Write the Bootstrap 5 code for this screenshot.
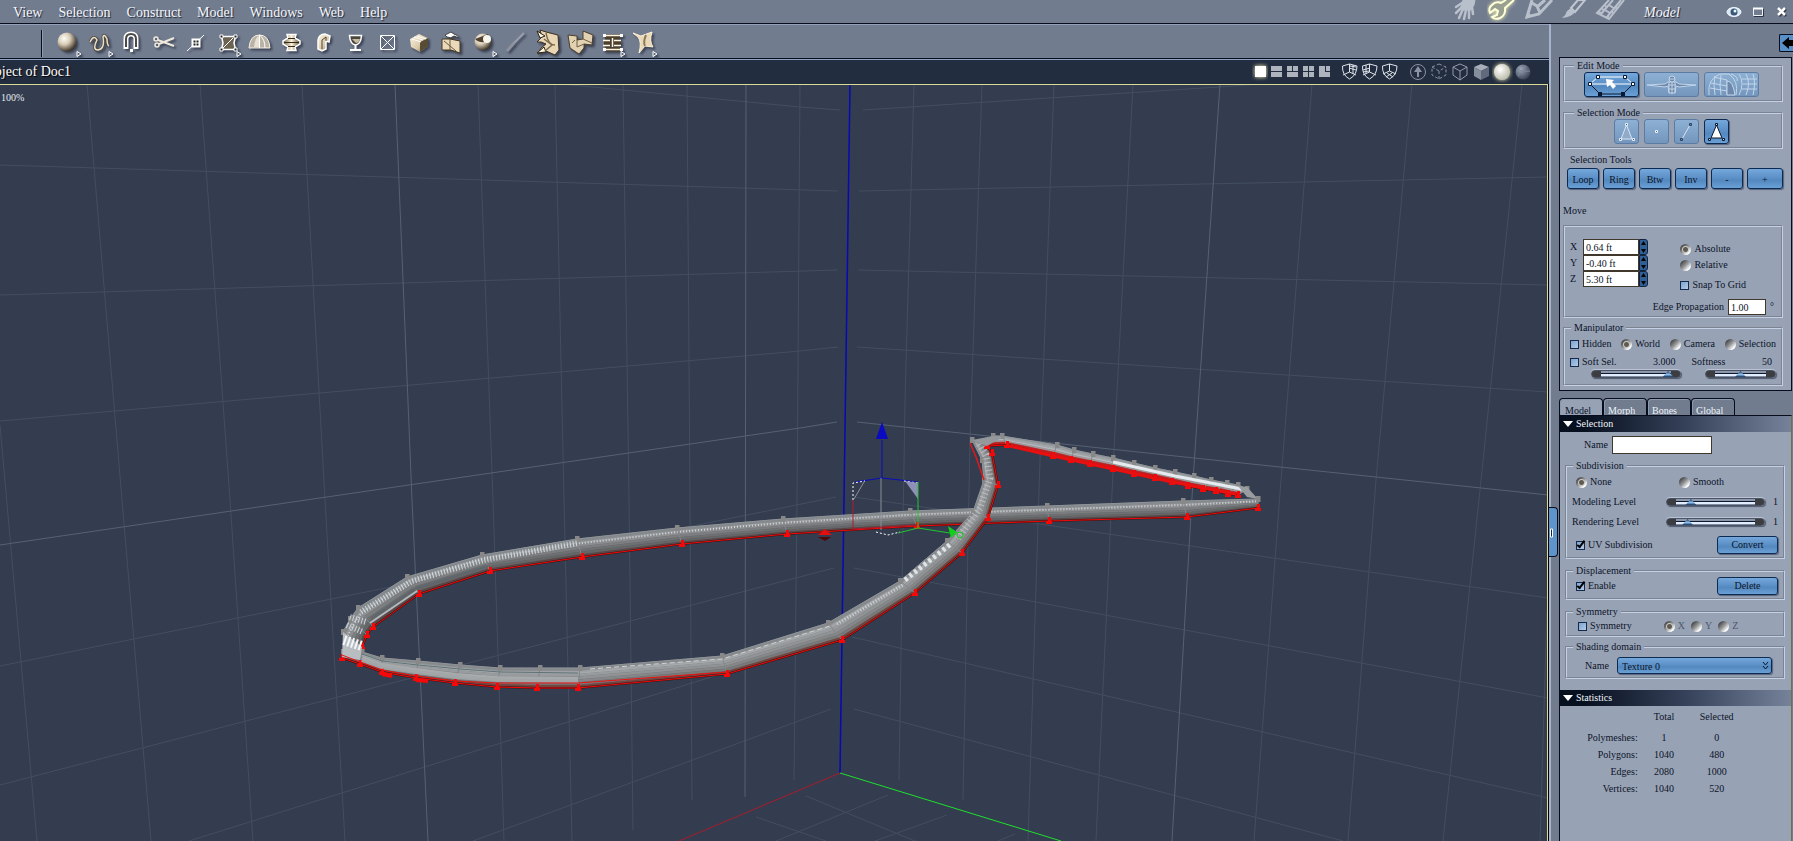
<!DOCTYPE html>
<html lang="en">
<head>
    <meta charset="UTF-8">
    <meta name="viewport" content="width=device-width, initial-scale=1.0">
    <title>Model - Doc1</title>
    <!-- Bootstrap CSS -->
    <link href="https://cdn.jsdelivr.net/npm/bootstrap@5.3.0/dist/css/bootstrap.min.css" rel="stylesheet">
    <!-- Custom CSS -->
    <style>
      :root {
        --chrome: #727c8f;
        --panel: #98a2b5;
        --ink: #0b1428;
        --edge: #070d1c;
        --blue: #5990c8;
      }
      body {
        background-color: var(--chrome);
        color: var(--ink);
        font-family: "Liberation Serif", "Times New Roman", serif;
        font-size: 10px;
        line-height: 12px;
      }
      button, input, select { font-family: inherit; font-size: 10px; line-height: 12px; color: var(--ink); }
      button { border: 0; padding: 0; background: none; }
      svg { display: block; }

      /* menu and tool bars */
      .menu-bar { height: 24px; padding-left: 13px; border-bottom: 1px solid var(--edge); overflow: hidden; }
      .menu-bar a, .mode-name { color: #f4f7fb; font-size: 14px; line-height: 24px; padding-top: 2px; text-decoration: none; text-shadow: 1px 1px 1px #1b2438; }
      .mode-name { font-style: italic; width: 82px; }
      .room-btns { gap: 4px; margin-right: 17px; }
      .window-btns { gap: 8px; padding-right: 3px; }
      .tool-bar { height: 35px; background: var(--chrome); border-top: 1px solid #93a0b8; border-bottom: 1px solid var(--edge); padding: 4px 0 0 41px; }
      .tool-bar svg { filter: drop-shadow(2px 2px 1px #3b4355); }
      .divider { width: 1px; height: 27px; background: var(--edge); box-shadow: 1px 0 #8e9ab0; margin-right: 10px; }
      .title-bar { height: 25px; background: #232d40; border-top: 1px solid #8ea2c4; padding-right: 15px; }
      .doc-title { width: 71px; overflow: hidden; color: #fff; font-size: 14px; line-height: 24px; white-space: nowrap; text-shadow: 1px 1px 1px #000; }

      /* 3D view */
      .view { border-top: 1px solid #d9da98; border-right: 1px solid #d9da98; background: #333d4f; min-height: 0; margin-right: 1px; }
      .view svg { width: 100%; height: 100%; }
      .view-wrap { background: #000; min-height: 0; min-width: 0; }
      .zoom-label { left: 1px; top: 7px; color: #e6ebf2; }

      /* side panel */
      .side { width: 244px; flex: none; border-left: 2px solid #a5b3cd; padding-left: 8px; }
      .back-row { height: 33px; padding-top: 10px; }
      .back-btn { width: 14px; height: 18px; background: var(--blue); border: 1px solid var(--edge); border-right: 0; border-radius: 2px 0 0 2px; }
      .handle { left: -2px; top: 483px; width: 9px; height: 50px; background: #5f94cb; border: 1px solid var(--edge); border-left: 0; border-radius: 0 4px 4px 0; }
      .panel-box { background: var(--panel); border: 1px solid var(--edge); padding: 2px 8px 4px 3px; margin-right: 1px; }
      fieldset { border: 2px groove #c3d0e6; padding: 0 5px 3px 5px; }
      legend { float: none; width: auto; margin: 0 0 0 1px; padding: 0 3px; font-size: 10px; line-height: 12px; }

      .blue-btn { background: linear-gradient(#75a8dc, #5489c0 60%, #6ba0d6); border: 1px solid #0d2a50; border-radius: 3px; box-shadow: 1px 1px 1px #56627a; }
      .mode-row { gap: 5px; padding-right: 4px; }
      .mode-btn { height: 25px; }
      .mode-btn.wide-btn { width: 55px; }
      .mode-btn.square-btn { width: 25px; }
      .mode-btn.faded { background: linear-gradient(#8db0d4, #7496bd); border-color: #5b7ba3; box-shadow: none; }
      .select-mode { margin-top: 5px; }
      .tools-label { padding: 5px 0 2px 7px; }
      .tool-btn { height: 21px; padding-top: 2px; }
      .wide-label { width: 61px; height: 18px; }

      .move-set { padding: 12px 5px 1px 5px; margin-top: 8px; }
      .move-set .axis-label { width: 13px; }
      .space-opts { padding-right: 30px; }
      .edge-row { padding: 8px 2px 0 0; }
      .num-input { border: 1px solid #40382c; background: #fff; padding: 0 2px; height: 16px; min-width: 0; border-radius: 0; }
      .pos-box { width: 56px; }
      .prop-box { width: 38px; }
      .name-box { width: 100px; height: 18px; }
      .spinner { width: 9px; height: 16px; background: #2f5f94; border: 1px solid #10243f; border-radius: 0 3px 3px 0; }

      .tick, .dot { appearance: none; flex: none; margin: 0; }
      .tick { width: 9px; height: 9px; border: 1px solid #15294a; background: linear-gradient(135deg, #7ba3cf, #b4cbe6); position: relative; }
      .tick:checked::after { content: ""; position: absolute; left: 2px; top: -3px; width: 4px; height: 9px; border: solid #000; border-width: 0 2px 2px 0; transform: rotate(38deg); }
      .dot { width: 11px; height: 11px; border-radius: 50%; background: linear-gradient(135deg, #2c2c2c 5%, #97999b 50%, #fff 80%); }
      .dot:checked { background: radial-gradient(circle, #5f5b52 0 2px, #c9c8c4 3px, transparent 4px), linear-gradient(135deg, #2c2c2c 5%, #97999b 50%, #fff 80%); }
      .pick { display: flex; align-items: center; gap: 3px; }
      .pick.off { color: #4d586c; }
      .soft-row { padding-top: 2px; }
      .soft-sliders { padding: 2px 0 3px; }

      .slider { appearance: none; height: 8px; margin: 0; border-radius: 4px; border: 1px solid #4a5466; padding: 0 2px;
        background: linear-gradient(90deg, #3c3d40 9px, transparent 9px calc(100% - 9px), #3c3d40 calc(100% - 9px)), linear-gradient(#8d98ab 2px, #0b1830 2px 3px, #e2edff 3px 5px, #7f8b9e 5px);
        box-shadow: 1px 1px 1px #4f5a6e, 0 -1px #b9c3d3; }
      .slider::-webkit-slider-thumb { appearance: none; width: 11px; height: 6px; background: linear-gradient(#10305c, #8fc0ef 60%, #10305c); clip-path: polygon(50% 0, 100% 100%, 0 100%); }
      .soft-range { width: 90px; }
      .soft-fall { width: 71px; }
      .level { width: 99px; }

      .tabs { height: 17px; margin-top: 7px; }
      .tabs button { width: 44px; border: 1px solid var(--edge); border-bottom: 0; border-radius: 4px 4px 0 0; color: #eef2f8; padding: 6px 0 0 4px; text-align: left; box-shadow: inset 1px 1px #8d99b0; }
      .tabs button.active { background: var(--panel); color: var(--ink); padding-left: 5px; }
      .props { background: var(--panel); border: 1px solid var(--edge); border-bottom: 0; border-right-color: #6b7152; margin-right: 1px; }
      .section-bar { height: 16px; width: 100%; background: linear-gradient(90deg, #07101f 10%, #36425a 55%, #76819a); color: #f2f5fa; padding-left: 3px; gap: 3px; }
      .prop-set { margin: 6px 6px 0 5px; }
      .inset-row { padding-left: 4px; }
      .sym-row { gap: 6px; padding: 2px 0 0 6px; }
      .sym-label { margin-right: 26px; }
      .domain-set { margin-top: 4px; }
      .domain-row { padding: 4px 6px 0 0; }
      .combo { height: 17px; width: 155px; appearance: none; padding: 3px 4px 0; }
      .combo-mark { right: 3px; top: 5px; pointer-events: none; }
      .stats-bar { margin-top: 11px; }
      .stats { width: 164px; margin: 2px 0 0 19px; }
      .stats th, .stats td { font-weight: normal; text-align: center; height: 17px; padding: 0; }
      .stats tbody th { text-align: right; }
      .stats thead th { height: 21px; padding-bottom: 4px; }
      .stats col { width: 52px; }
      .stats col.names { width: 58px; }
    </style>
</head>
<body class="vh-100 d-flex flex-column overflow-hidden">

    <!-- shared paint -->
    <svg width="0" height="0" class="position-absolute">
      <defs>
        <radialGradient id="ball" cx="35%" cy="32%" r="70%"><stop offset="0" stop-color="#fffdf6"/><stop offset=".45" stop-color="#d9cdb8"/><stop offset="1" stop-color="#3d3325"/></radialGradient>
        <linearGradient id="sand" x1="0" y1="0" x2="1" y2="1"><stop offset="0" stop-color="#fff7e4"/><stop offset=".6" stop-color="#d8c8a8"/><stop offset="1" stop-color="#6e5f43"/></linearGradient>
        <linearGradient id="brass" x1="0" x2="1"><stop offset="0" stop-color="#6a5c44"/><stop offset=".5" stop-color="#fff4dc"/><stop offset="1" stop-color="#5a4c36"/></linearGradient>
        <radialGradient id="pearl" cx="38%" cy="35%" r="70%"><stop offset="0" stop-color="#fff"/><stop offset="1" stop-color="#b9b9a8"/></radialGradient>
        <radialGradient id="darkball" cx="35%" cy="32%" r="70%"><stop offset="0" stop-color="#a0a9b9"/><stop offset="1" stop-color="#3b4558"/></radialGradient>
        <symbol id="more" viewBox="0 0 6 6"><path d="M1 0.5L5 3L1 5.5Z" fill="#5c6678" stroke="#fff"/></symbol>
      </defs>
    </svg>

    <header class="menu-bar d-flex align-items-center flex-shrink-0">
      <nav class="d-flex gap-3">
        <a href="#">View</a>
        <a href="#">Selection</a>
        <a href="#">Construct</a>
        <a href="#">Model</a>
        <a href="#">Windows</a>
        <a href="#">Web</a>
        <a href="#">Help</a>
      </nav>
      <div class="room-btns d-flex ms-auto">
        <button aria-label="Assemble"><svg width="32" height="24" fill="none" stroke="#b8c0cc" stroke-linecap="round"><path d="M12 0L10 7L12 10L20 10L23 5L24 0Z" fill="#b8c0cc"/><path d="M11 3L5 7M11 7L5 13M12 9L8 18M15 10L13 19M18 10L18 18M21 7L22 14" stroke-width="2.500"/></svg></button>
        <button aria-label="Model room"><svg width="32" height="24"><path d="M27 0L18 8Q19 15 13 18Q8 20 5 17L10 15L11 11L8 9L3 13Q1 8 5 5Q9 1 14 3L19 0" fill="#99a08f" stroke="#ffffd8" stroke-width="2" filter="drop-shadow(0 0 2px #f4f5b4)"/></svg></button>
        <button aria-label="Draw"><svg width="32" height="24" fill="none" stroke="#b8c0cc" stroke-width="3"><path d="M9 0L4 17L16 14L29 0M9 3L14 6L17 13M14 7L22 0"/><path d="M4 18L5 13L9 16Z" fill="#b8c0cc" stroke-width="1"/></svg></button>
        <button aria-label="Texture"><svg width="32" height="24"><path d="M19 0L12 8L16 12L26 0Z" fill="none" stroke="#c0c7d2" stroke-width="2"/><path d="M12 8L16 12Q13 17 3 18Q7 15 8 11Z" fill="#b8c0cc"/></svg></button>
        <button aria-label="Render"><svg width="32" height="24" fill="none" stroke="#b8c0cc"><path d="M14 0L2 13L14 19L29 0M18 0L6 14M26 0L12 17" stroke-width="2"/><path d="M10 10L15 13M14 5L20 9M4 12L6 13M7 9L9 10M10 6L12 7M12 16L14 17M16 11L18 13M20 7L22 8" stroke-width="2"/></svg></button>
      </div>
      <span class="mode-name">Model</span>
      <div class="window-btns d-flex">
        <button aria-label="Show"><svg width="16" height="24"><ellipse cx="8" cy="12" rx="7" ry="4.500" fill="#dbe9f6" stroke="#f3f8fd"/><circle cx="8" cy="12" r="3.500" fill="#3d5674"/><circle cx="9" cy="11" r="1.500" fill="#dff"/></svg></button>
        <button aria-label="Maximize"><svg width="16" height="24"><path d="M3.500 8.500H12.500V15.500H3.500Z" fill="none" stroke="#eef3f9"/><path d="M3 8.500H13" stroke="#fff" stroke-width="2"/><path d="M13.500 9V16.500H4" fill="none" stroke="#2c3548"/></svg></button>
        <button aria-label="Close"><svg width="16" height="24"><path d="M5 9L12 16M12 9L5 16" stroke="#2c3548" stroke-width="2.500"/><path d="M4 8L11 15M11 8L4 15" stroke="#fff" stroke-width="2.500"/></svg></button>
      </div>
    </header>

    <main class="d-flex flex-fill overflow-hidden">
      <div class="d-flex flex-column flex-fill view-wrap">
        <div class="tool-bar d-flex align-items-center flex-shrink-0">
          <span class="divider"></span>
          <button aria-label="Primitive"><svg width="32" height="33"><circle cx="15" cy="15" r="9.500" fill="url(#ball)"/><use href="#more" x="24" y="24" width="6" height="6"/></svg></button>
          <button aria-label="Curve"><svg width="32" height="33" fill="none"><path d="M6 15Q10 7 13 13Q8 23 14 23Q21 22 19 10Q20 6 23 12Q23 18 25 19" stroke="#4f4636" stroke-width="3"/><path d="M6 15Q10 7 13 13Q8 23 14 23Q21 22 19 10Q20 6 23 12Q23 18 25 19" stroke="#e8dfcc" stroke-width="1.500"/><use href="#more" x="24" y="24" width="6" height="6"/></svg></button>
          <button aria-label="Magnet"><svg width="32" height="33" fill="none"><path d="M10 22V12Q10 7 15 7Q20 7 20 12V22" stroke="#fff" stroke-width="5"/><path d="M10 20V12Q10 7 15 7Q20 7 20 12V20" stroke="#4c4a48" stroke-width="2"/><path d="M14 22h3v3h-3z" fill="#fff"/></svg></button>
          <button aria-label="Cut"><svg width="32" height="33" fill="none" stroke="#f1eadc" stroke-width="1.500"><circle cx="8" cy="12" r="2"/><circle cx="9" cy="18" r="2"/><path d="M10 13L26 19M11 17L26 11" stroke-width="2"/></svg></button>
          <button aria-label="Add point"><svg width="32" height="33" fill="none"><path d="M7 24L24 8" stroke="#fff"/><path d="M12.500 12.500h7v7h-7z" fill="#222" stroke="#fff" stroke-width="2"/><path d="M16 13v6M13 16h6" stroke="#fff"/></svg></button>
          <button aria-label="Polygon"><svg width="32" height="33"><path d="M9.500 9.500H23.500L22 16L23.500 22.500H9.500L11 16Z" fill="#6b6252" stroke="#fff" stroke-width="1.500"/><path d="M8 8h3v3H8zM22 8h3v3h-3zM8 21h3v3H8zM22 21h3v3h-3z" fill="#222" stroke="#fff"/><path d="M11 21L21 11" stroke="#fff"/><use href="#more" x="24" y="24" width="6" height="6"/></svg></button>
          <button aria-label="Dome"><svg width="32" height="33"><path d="M5 21Q6 8 15.500 8Q25 8 26 21Z" fill="#b9b2a5" stroke="#f6f0e4"/><path d="M10 20Q11 10 15 9V20Z" fill="#e6e0d4"/><path d="M15.500 8V21M15.500 8Q21 12 21 21" fill="none" stroke="#fff"/></svg></button>
          <button aria-label="Lathe"><svg width="32" height="33"><path d="M11 7.500H20L19 11L24 14V17L19 20L20 23.500H11L12 20L7 17V14L12 11Z" fill="url(#brass)" stroke="#fff" stroke-width="1.500"/><path d="M8 15.500H23M12 11.500H19M12 19.500H19" stroke="#372c1c"/></svg></button>
          <button aria-label="Sweep"><svg width="32" height="33"><path d="M10 22V13Q11 7 17 7L22 9L21 15L18 14V22L14 24Z" fill="url(#sand)" stroke="#fff" stroke-width="1.500"/><path d="M14 22V13L18 10V14" fill="none" stroke="#50432e"/></svg></button>
          <button aria-label="Goblet"><svg width="32" height="33"><path d="M9.500 8.500H21.500Q21 17 15.500 18Q10 17 9.500 8.500Z" fill="#4b463e" stroke="#fff" stroke-width="1.500"/><path d="M12 12H20Q19 16 16 16Z" fill="#c8bb9f"/><path d="M15.500 18V22M10 23H21" stroke="#fff" stroke-width="2"/></svg></button>
          <button aria-label="Grid box"><svg width="32" height="33" fill="none" stroke="#fff"><path d="M8.500 8.500H22.500V22.500H8.500Z"/><path d="M9 9L22 22M22 9L9 22"/></svg></button>
          <button aria-label="Cube"><svg width="32" height="33"><path d="M6 12L15 7L24 11L24 19L16 25L7 20Z" fill="url(#sand)"/><path d="M16 15L24 11V19L16 25Z" fill="#594c35"/><path d="M8 12L17 15M10 10L19 13M13 9L22 12" stroke="#fff"/></svg></button>
          <button aria-label="Box pick"><svg width="32" height="33"><path d="M6 12H14L24 14V26L15 23H6Z" fill="#ead9ba" stroke="#453923"/><path d="M8 14L20 24M14 12V23" stroke="#6b5b3d"/><path d="M9 8L15 5L18 7Q22 8 23 11L18 9Q15 12 11 10Z" fill="#fff" stroke="#444"/></svg></button>
          <button aria-label="Sphere cut"><svg width="32" height="33"><circle cx="15" cy="15" r="8.500" fill="url(#ball)"/><path d="M7 12Q13 18 23 13L20 7Z" fill="#51442f"/><ellipse cx="19" cy="12" rx="4" ry="4" fill="#f8f5ec"/><use href="#more" x="24" y="24" width="6" height="6"/></svg></button>
          <button aria-label="Knife"><svg width="32" height="33"><path d="M13 17L24 6" stroke="#9aa0aa" stroke-width="2"/><path d="M7 24L14 16" stroke="#8c929d" stroke-width="3"/></svg></button>
          <button aria-label="Extrude"><svg width="32" height="33"><path d="M8 3L14 5L26 8L27 23L23 28L14 24L6 27L9 21L14 17L9 15L5 15L10 10Z" fill="#e8d6b4" stroke="#3b3020"/><path d="M5 4L13 9L8 11ZM5 26L12 20L14 25Z" fill="#fff6e2" stroke="#2b2216"/><path d="M14 6Q16 18 23 18M12 12L20 18L13 24" stroke="#7a6a4c" fill="none" stroke-width="1.500"/></svg></button>
          <button aria-label="Bend"><svg width="32" height="33"><path d="M4 8L13 9V13L19 12V4L29 8L28 18L20 17V21L15 27L6 21Z" fill="#e3d2b2" stroke="#4b3e29"/><path d="M13 13V20L20 17M19 12L28 16M8 16L11 13" stroke="#6d5f45" fill="none"/></svg></button>
          <button aria-label="Align"><svg width="32" height="33"><path d="M9 10H24M8 16H25M9 22H24" stroke="#4c3f2c" stroke-width="5"/><path d="M8 8.500H25M7 13.500H14M18 13.500H25M7 18.500H14M18 18.500H25M8 22.500H25M16.500 11V20" stroke="#fff6e0" stroke-width="1.500"/><path d="M7 7h3v3H7zM24 7h3v3h-3zM7 21h3v3H7zM24 21h3v3h-3z" fill="#fff"/><use href="#more" x="24" y="24" width="6" height="6"/></svg></button>
          <button aria-label="Twist"><svg width="32" height="33"><path d="M5 6L13 9L24 5Q21 14 25 20L17 19L11 26Q14 15 10 10Z" fill="#ead9b8" stroke="#fff2d6"/><path d="M18 8Q15 15 17 19" stroke="#8a7a5c" fill="none" stroke-width="2"/><use href="#more" x="24" y="24" width="6" height="6"/></svg></button>
        </div>

        <div class="title-bar d-flex align-items-center flex-shrink-0">
          <div class="doc-title d-flex justify-content-end">bject of Doc1</div>
          <div class="d-flex ms-auto">
            <button aria-label="One view"><svg width="16" height="22"><path d="M3 5h11v11H3z" fill="#fff" filter="drop-shadow(0 0 2px #ffffb0)"/></svg></button>
            <button aria-label="Two views"><svg width="16" height="22" fill="#aeb4be"><path d="M3 5h11v5H3zM3 11h11v5H3z"/></svg></button>
            <button aria-label="Three views"><svg width="16" height="22" fill="#aeb4be"><path d="M3 5h5v5H3zM9 5h5v5H9zM3 11h11v5H3z"/></svg></button>
            <button aria-label="Four views"><svg width="16" height="22" fill="#aeb4be"><path d="M3 5h5v5H3zM9 5h5v5H9zM3 11h5v5H3zM9 11h5v5H9z"/></svg></button>
            <button aria-label="Corner views" class="me-2"><svg width="16" height="22" fill="#aeb4be"><path d="M3 5h6v6h5v5H3zM10 5h4v5h-4z"/></svg></button>
            <button aria-label="Left plane"><svg width="20" height="22" fill="none" stroke="#dfe4ea"><path d="M2.500 5L9.500 3L17 5Q17 14 9.500 18Q2 14 2.500 5Z"/><path d="M9.500 3V11L3 14M9.500 11L16 14M9 7L16 9M13 4V13M10 5L16 6" /></svg></button>
            <button aria-label="Right plane"><svg width="20" height="22" fill="none" stroke="#dfe4ea"><path d="M2.500 5L9.500 3L17 5Q17 14 9.500 18Q2 14 2.500 5Z"/><path d="M9.500 3V11L3 14M9.500 11L16 14M10 7L3 9M6 4V13M9 10L3 11" /></svg></button>
            <button aria-label="Floor plane" class="me-2"><svg width="20" height="22" fill="none" stroke="#dfe4ea"><path d="M2.500 5L9.500 3L17 5Q17 14 9.500 18Q2 14 2.500 5Z"/><path d="M9.500 3V10L3 13M9.500 10L16 13M7 12L13 16M12 12L6 16" /></svg></button>
            <button aria-label="Light"><svg width="21" height="22" fill="none" stroke="#8a93a3"><circle cx="10" cy="11" r="7.500"/><path d="M10 5L14 11H11V16H9V11H6Z" fill="#8a93a3" stroke="none"/></svg></button>
            <button aria-label="Bounding box"><svg width="21" height="22" fill="none" stroke="#8a93a3" stroke-dasharray="3 2"><path d="M10 3L17 6V14L10 18L3 14V6Z"/><path d="M3 6L10 10L17 6M10 10V18"/></svg></button>
            <button aria-label="Wireframe"><svg width="21" height="22" fill="none" stroke="#929bab"><path d="M10 3L17 6V14L10 19L3 14V6Z"/><path d="M3 6L10 10L17 6M10 10V19"/></svg></button>
            <button aria-label="Flat"><svg width="21" height="22"><path d="M10 3L18 6L10 10L3 6Z" fill="#a8afba"/><path d="M3 6L10 10V19L3 15Z" fill="#858e9d"/><path d="M18 6L10 10V19L18 15Z" fill="#606a7c"/></svg></button>
            <button aria-label="Shaded"><svg width="21" height="22"><circle cx="10" cy="11" r="8" fill="url(#pearl)" filter="drop-shadow(0 0 2px #f4f5b4)"/></svg></button>
            <button aria-label="Textured"><svg width="21" height="22"><circle cx="10" cy="11" r="7.500" fill="url(#darkball)"/><path d="M4 8Q10 12 17 10M5 15Q10 10 13 5" stroke="#7c879b" fill="none"/></svg></button>
          </div>
        </div>

        <div class="view flex-fill position-relative">
          <span class="zoom-label position-absolute">100%</span>
          <svg viewBox="0 85 1547 756" preserveAspectRatio="xMidYMid slice" fill="none">
            <defs>
              <marker id="greyVert" markerWidth="5" markerHeight="6" refX="2.500" refY="3" markerUnits="userSpaceOnUse"><path d="M0 0h5v6H0z" fill="#888"/></marker>
              <marker id="redVert" markerWidth="6" markerHeight="8" refX="3" refY="4" markerUnits="userSpaceOnUse"><path d="M2 0h3v4h1v3H0V4h2z" fill="#f40808"/></marker>
            </defs>
            <!-- walls and floor -->
            <g stroke="#434e61">
              <path d="M0 425L37 841M87 84L122 500L151 841M200 84L230 500L253 841M302 84L325 500L345 841M478 84L493 500L504 841M555 84L564 500L572 841M623 84L629 500L633 830M687 84L690 500L692 800M800 84L797 500L794 780"/>
              <path d="M914 84L905 400L899 780M982 84L970 440L963 800M1054 84L1040 460L1028 841M1133 84L1114 450L1096 841M1312 84L1281 480L1254 841M1412 84L1376 480L1348 841M1522 84L1480 490L1443 841M1547 610L1540 841"/>
              <path d="M561 84L800 107L840 110M0 165L838 191M0 295L838 270M0 421L800 351L838 347M0 666L836 497M0 785L834 568M189 841L832 639M473 841L831 709"/>
              <path d="M863 110L1219 87L1260 84M859 191L1548 177M858 270L1548 285M857 347L1548 392M854 497L1548 598M854 568L1548 698M852 637L1548 798M854 709L1343 841"/>
              <path d="M806 796L915 841M756 817L826 841M888 795L776 841M947 815L875 841M1015 834L998 841"/>
            </g>
            <path stroke="#566174" d="M395 84L412 500L428 841M746 84L745 797M1220 84L1193 480L1172 841M0 545L306 500L800 428L837 422M857 422L1194 458L1548 495"/>
            <!-- axes -->
            <path stroke="#0808b4" stroke-width="1.500" d="M850 84L844 500L840 773"/>
            <path stroke="#a81c2c" d="M840 773L679 841"/>
            <path stroke="#1fe02c" d="M840 773L1061 841"/>
            <g id="track"></g>
            <!-- manipulator -->
            <path stroke="#0a0ac0" d="M882 440V478M855 482L882 478L918 482"/>
            <path fill="#0a0ac0" d="M882 422L888 439H876Z"/>
            <path stroke="#8a8f98" d="M881 478V530"/>
            <path stroke="#b01c2c" d="M853 500V529L917 525"/>
            <path stroke="#fff" stroke-dasharray="2 2" d="M853 500V483L865 481M904 481L918 483M876 532L888 535L900 532"/>
            <path fill="#8f90b8" d="M905 481L918 483V499Z"/>
            <path stroke="#8a8f98" d="M854 499L864 482"/>
            <path stroke="#1fc82c" d="M918 482V528L950 533M918 528L898 533"/>
            <path fill="#10d01c" d="M948 526L957 532L951 538Z"/>
            <circle cx="960" cy="535" r="3" stroke="#10d01c"/>
            <path fill="#e01010" d="M825 529L832 535H818Z"/>
            <path fill="#500808" d="M818 537H831L825 541Z"/>
          </svg>
        </div>
      </div>

      <aside class="side d-flex flex-column position-relative">
        <button class="handle position-absolute" aria-label="Collapse panel"><svg width="8" height="48"><path d="M1.500 21h2v8h-2z" stroke="#fff" fill="#10243f"/></svg></button>
        <div class="back-row d-flex justify-content-end"><button class="back-btn" aria-label="Back"><svg width="13" height="16"><path d="M2 8L9 2V5H13V11H9V14Z" fill="#000"/></svg></button></div>

        <section class="panel-box">
          <fieldset>
            <legend class="ms-1">Edit Mode</legend>
            <div class="d-flex justify-content-center mode-row">
              <button class="blue-btn mode-btn wide-btn" aria-label="Cage"><svg width="53" height="23" fill="none"><path d="M5 11L13 4H40L48 11M5 11H48" stroke="#fff"/><path d="M5 11L15 21H38L48 11" stroke="#081830"/><path d="M3.500 9.500h3v3h-3zM11.500 2.500h3v3h-3zM38.500 2.500h3v3h-3zM46.500 9.500h3v3h-3z" fill="#fff" stroke="#081830"/><path d="M13 19h4v4h-4zM36 19h4v4h-4z" fill="#081830"/><path d="M21 6L29 7L27 9L31 13L28 16L25 12L22 14Z" fill="#fff"/></svg></button>
              <button class="blue-btn mode-btn wide-btn faded" aria-label="Pose"><svg width="53" height="23" fill="none" stroke="#c3d6ea"><path d="M2 12L20 11L23 9H31L34 11L51 12L34 14L31 13L30 20H24L23 13L20 14Z" fill="#6d88aa"/><path d="M27 3V21M24 9V20M30 9V20M23 12H31M24 16H30"/><circle cx="27" cy="6" r="3" fill="#6d88aa"/><path d="M24 6H30"/></svg></button>
              <button class="blue-btn mode-btn wide-btn faded" aria-label="UV"><svg width="53" height="23" fill="none" stroke="#c3d6ea"><path d="M4 22Q2 6 15 1H24Q34 8 31 22M6 10L22 13M5 15L22 18M9 4L22 7M10 3Q8 12 10 22M16 2Q14 12 16 22M22 7V22M34 22Q40 10 34 1M41 22Q46 10 41 1M48 22Q51 10 48 1M37 6H52M38 11H52M37 16H52M26 1Q34 4 32 8"/><path d="M22 8Q28 8 30 22H22Z" fill="#6d88aa"/></svg></button>
            </div>
          </fieldset>

          <fieldset class="select-mode">
            <legend class="ms-1">Selection Mode</legend>
            <div class="d-flex justify-content-center mode-row">
              <button class="blue-btn mode-btn square-btn faded" aria-label="Any"><svg width="23" height="23"><path d="M11.500 5L17 19H6Z" fill="#8fabc9" stroke="#d7e5f3"/><path d="M10.500 3.500h2v2h-2zM4.500 18.500h2v2h-2zM17.500 18.500h2v2h-2z" fill="#456" stroke="#e6f0fa"/></svg></button>
              <button class="blue-btn mode-btn square-btn faded" aria-label="Vertex"><svg width="23" height="23"><path d="M10.500 10.500h2v2h-2z" fill="#468" stroke="#f0f6fc"/></svg></button>
              <button class="blue-btn mode-btn square-btn faded" aria-label="Edge"><svg width="23" height="23"><path d="M7 19L15 5" stroke="#d7e5f3"/><path d="M14.500 3.500h2v2h-2zM5.500 18.500h2v2h-2z" fill="#6f89a8" stroke="#2a4468"/></svg></button>
              <button class="blue-btn mode-btn square-btn" aria-label="Face"><svg width="23" height="23"><path d="M11.500 5L17 18H6Z" fill="#fff" stroke="#081830"/><path d="M10.500 3.500h2v2h-2zM3.500 18.500h2v2h-2zM17.500 18.500h2v2h-2z" fill="#cde" stroke="#081830"/></svg></button>
            </div>
          </fieldset>

          <div class="tools-label">Selection Tools</div>
          <div class="row g-0 row-cols-6 ms-1">
            <div class="col pe-1"><button class="blue-btn tool-btn w-100">Loop</button></div>
            <div class="col pe-1"><button class="blue-btn tool-btn w-100">Ring</button></div>
            <div class="col pe-1"><button class="blue-btn tool-btn w-100">Btw</button></div>
            <div class="col pe-1"><button class="blue-btn tool-btn w-100">Inv</button></div>
            <div class="col pe-1"><button class="blue-btn tool-btn w-100">-</button></div>
            <div class="col"><button class="blue-btn tool-btn w-100">+</button></div>
          </div>
          <div class="pt-3">Move</div>

          <fieldset class="move-set">
            <div class="d-flex justify-content-between">
              <div>
                <div class="d-flex align-items-center"><label for="posX" class="axis-label">X</label><input id="posX" class="num-input pos-box" value="0.64 ft"><span class="spinner"><svg width="7" height="14"><path d="M3.500 1L6 5H1ZM3.500 13L6 9H1Z"/></svg></span></div>
                <div class="d-flex align-items-center"><label for="posY" class="axis-label">Y</label><input id="posY" class="num-input pos-box" value="-0.40 ft"><span class="spinner"><svg width="7" height="14"><path d="M3.500 1L6 5H1ZM3.500 13L6 9H1Z"/></svg></span></div>
                <div class="d-flex align-items-center"><label for="posZ" class="axis-label">Z</label><input id="posZ" class="num-input pos-box" value="5.30 ft"><span class="spinner"><svg width="7" height="14"><path d="M3.500 1L6 5H1ZM3.500 13L6 9H1Z"/></svg></span></div>
              </div>
              <div class="d-flex flex-column gap-1 space-opts pt-1">
                <label class="pick"><input type="radio" class="dot" name="space" checked>Absolute</label>
                <label class="pick"><input type="radio" class="dot" name="space">Relative</label>
                <label class="pick pt-1"><input type="checkbox" class="tick">Snap To Grid</label>
              </div>
            </div>
            <div class="d-flex align-items-center justify-content-end edge-row">
              <label for="edgeProp" class="pe-1">Edge Propagation</label><input id="edgeProp" class="num-input prop-box" value="1.00"><span class="ps-1">°</span>
            </div>
          </fieldset>

          <fieldset class="mt-1">
            <legend>Manipulator</legend>
            <div class="d-flex justify-content-between py-1">
              <label class="pick"><input type="checkbox" class="tick">Hidden</label>
              <label class="pick"><input type="radio" class="dot" name="frame" checked>World</label>
              <label class="pick"><input type="radio" class="dot" name="frame">Camera</label>
              <label class="pick"><input type="radio" class="dot" name="frame">Selection</label>
            </div>
            <div class="d-flex soft-row">
              <label class="pick"><input type="checkbox" class="tick">Soft Sel.</label>
              <span class="ms-auto">3.000</span>
              <label for="softness" class="ps-3">Softness</label>
              <span class="ms-auto pe-1">50</span>
            </div>
            <div class="d-flex justify-content-end gap-4 soft-sliders">
              <input type="range" class="slider soft-range" value="94" aria-label="Soft selection radius">
              <input type="range" class="slider soft-fall" id="softness" value="50">
            </div>
          </fieldset>
        </section>

        <div class="tabs d-flex flex-shrink-0">
          <button class="active">Model</button>
          <button>Morph</button>
          <button>Bones</button>
          <button>Global</button>
        </div>
        <section class="props flex-fill">
          <button class="section-bar d-flex align-items-center"><svg width="10" height="6"><path d="M0 0H10L5 6Z" fill="#fff"/></svg>Selection</button>
          <div class="d-flex align-items-center my-1 ps-4"><label for="objName" class="pe-1">Name</label><input id="objName" class="num-input name-box"></div>

          <fieldset class="prop-set">
            <legend>Subdivision</legend>
            <div class="row g-0 pt-1">
              <label class="pick col-6 inset-row"><input type="radio" class="dot" name="subdiv" checked>None</label>
              <label class="pick col-6 inset-row"><input type="radio" class="dot" name="subdiv">Smooth</label>
            </div>
            <div class="d-flex align-items-center pt-2"><label for="modelLevel">Modeling Level</label><input type="range" class="slider level ms-auto" id="modelLevel" value="20"><span class="ps-2">1</span></div>
            <div class="d-flex align-items-center pt-2"><label for="renderLevel">Rendering Level</label><input type="range" class="slider level ms-auto" id="renderLevel" value="16"><span class="ps-2">1</span></div>
            <div class="d-flex align-items-center justify-content-between pt-2 inset-row"><label class="pick"><input type="checkbox" class="tick" checked>UV Subdivision</label><button class="blue-btn wide-label">Convert</button></div>
          </fieldset>

          <fieldset class="prop-set">
            <legend>Displacement</legend>
            <div class="d-flex align-items-center justify-content-between inset-row"><label class="pick"><input type="checkbox" class="tick" checked>Enable</label><button class="blue-btn wide-label">Delete</button></div>
          </fieldset>

          <fieldset class="prop-set">
            <legend>Symmetry</legend>
            <div class="d-flex sym-row">
              <label class="pick sym-label"><input type="checkbox" class="tick">Symmetry</label>
              <label class="pick off"><input type="radio" class="dot" name="axis" checked>X</label>
              <label class="pick off"><input type="radio" class="dot" name="axis">Y</label>
              <label class="pick off"><input type="radio" class="dot" name="axis">Z</label>
            </div>
          </fieldset>

          <fieldset class="prop-set domain-set">
            <legend>Shading domain</legend>
            <div class="d-flex align-items-center justify-content-end domain-row">
              <label for="domain" class="pe-2">Name</label>
              <div class="position-relative"><select id="domain" class="combo blue-btn"><option>Texture 0</option></select><svg class="combo-mark position-absolute" width="7" height="8" fill="none" stroke="#081830"><path d="M1 0L3.500 3L6 0M1 4L3.500 7L6 4"/></svg></div>
            </div>
          </fieldset>

          <button class="section-bar stats-bar d-flex align-items-center"><svg width="10" height="6"><path d="M0 0H10L5 6Z" fill="#fff"/></svg>Statistics</button>
          <table class="stats">
            <colgroup><col class="names"><col><col></colgroup>
            <thead><tr><td></td><th>Total</th><th>Selected</th></tr></thead>
            <tbody>
              <tr><th>Polymeshes:</th><td>1</td><td>0</td></tr>
              <tr><th>Polygons:</th><td>1040</td><td>480</td></tr>
              <tr><th>Edges:</th><td>2080</td><td>1000</td></tr>
              <tr><th>Vertices:</th><td>1040</td><td>520</td></tr>
            </tbody>
          </table>
        </section>
      </aside>
    </main>

    <!-- Bootstrap JS and Popper.js -->
    <script src="https://cdn.jsdelivr.net/npm/bootstrap@5.3.0/dist/js/bootstrap.bundle.min.js"></script>

    <script>
      const track = document.getElementById("track");

      function add(d, attrs) {
        const p = document.createElementNS("http://www.w3.org/2000/svg", "path");
        p.setAttribute("d", d);
        for (const k in attrs) p.setAttribute(k, attrs[k]);
        track.appendChild(p);
      }

      const line = pts => "M" + pts.map(p => p.join(" ")).join("L");
      const mix = (a, b, t) => a.map((p, i) => [p[0] + (b[i][0] - p[0]) * t, p[1] + (b[i][1] - p[1]) * t]);

      // a ribbon between two edges, shaded in strips from the upper to the lower edge
      function band(top, low, shades, shine) {
        shades.forEach((c, i) => {
          const a = mix(top, low, i / shades.length);
          const b = mix(top, low, (i + 1) / shades.length);
          add(line(a.concat(b.reverse())) + "Z", { fill: c, stroke: c, "stroke-width": .5 });
        });
        add(line(mix(top, low, .25)), shine);
        for (let i = 0; i < top.length; i++) add(line([top[i], low[i]]), { stroke: "#83878a" });
        add(line(top), { stroke: "#909498", "marker-start": "url(#greyVert)", "marker-mid": "url(#greyVert)", "marker-end": "url(#greyVert)" });
        add(line(low), { stroke: "#3a1414", "stroke-width": 2 });
        add(line(low), { stroke: "#f40808", "marker-start": "url(#redVert)", "marker-mid": "url(#redVert)", "marker-end": "url(#redVert)" });
      }

      const grey = ["#83888c", "#96999b", "#8b8d8f", "#7c7e80", "#6e7072", "#646667", "#5c4748"];

      // far straight behind the crossing
      band([[993,436],[1002,436],[1057,445],[1074,450],[1093,454],[1113,458],[1134,463],[1155,468],[1175,472],[1194,476],[1211,480],[1227,483],[1238,485],[1247,489]],
           [[987,446],[1007,445],[1053,456],[1071,460],[1090,464],[1113,469],[1134,474],[1155,478],[1172,482],[1188,486],[1203,489],[1216,491],[1228,494],[1238,495]],
           ["#92979a", "#a9adb0", "#b4b9bc", "#a09a9c", "#c02020", "#e81010"], { stroke: "#9da1a4", "stroke-width": 1 });
      add("M1113 462L1175 476L1242 489", { stroke: "#e4eaed", "stroke-width": 3 });
      add("M1010 446L1053 456L1113 469L1172 482L1236 494", { stroke: "#e81010", "stroke-width": 3 });
      add("M1238 486L1247 497L1258 499L1247 487Z", { fill: "#999da0" });

      // long upper arc
      band([[343,632],[350,619],[358,608],[407,577],[482,555],[577,539],[677,528],[783,519],[910,511],[1047,506],[1183,501],[1258,499]],
           [[362,647],[367,635],[373,627],[419,594],[490,571],[582,557],[682,544],[787,534],[917,526],[1049,521],[1187,517],[1258,508]],
           grey, { stroke: "#d6dadd", "stroke-width": 2, "stroke-dasharray": "1 2" });
      add("M350 617L366 622M347 625L363 632M361 612L412 581L484 560L578 543", { stroke: "#ccd5da", "stroke-width": 6, "stroke-dasharray": "1 2" });
      add("M371 618L416 588L488 566", { stroke: "#5f666c", "stroke-width": 2 });
      add("M370 623L417 591", { stroke: "#b2b9be", "stroke-width": 2 });

      // near straight, up through the crossing
      band([[343,652],[362,652],[382,658],[418,661],[460,665],[500,668],[540,668],[580,668],[722,656],[828,623],[900,581],[947,541],[973,512],[984,480],[982,460],[972,440]],
           [[342,658],[360,664],[382,672],[416,678],[455,683],[497,687],[537,688],[578,688],[727,674],[842,640],[915,593],[962,553],[988,518],[998,485],[992,453],[987,446]],
           ["#85898c", "#a0a3a5", "#999c9e", "#919395", "#858788", "#787979", "#74443f"], { stroke: "#a8abad", "stroke-width": 1 });
      add("M362 654L382 661L418 665L460 669L500 672L578 673", { stroke: "#5e7377" });
      add("M362 659L382 666L416 671L455 676L497 679L578 680", { stroke: "#b1b5b7", "stroke-width": 6, opacity: .7 });
      add("M343 632L362 647L360 660L342 657Z", { fill: "#b7bdc1" });
      add("M344 640L362 646", { stroke: "#f4f7f8", "stroke-width": 10, "stroke-dasharray": "2 2" });
      add("M342 655L360 662L382 670L416 676L455 681L497 683L578 683L727 672", { stroke: "#f01010" });
      add("M382 674L392 676M416 680L428 681", { stroke: "#f40808", "stroke-width": 4 });
      add("M590 669L722 659L830 626", { stroke: "#cfd3d5", "stroke-dasharray": "5 3" });
      add("M837 624L903 585", { stroke: "#d0d4d6", "stroke-width": 3, "stroke-dasharray": "1 2" });
      add("M905 580L952 543", { stroke: "#dfe4e6", "stroke-width": 5, "stroke-dasharray": "3 3" });
      add("M958 538L980 508L990 478L986 455L978 442", { stroke: "#b9bec0", "stroke-width": 7, "stroke-dasharray": "1 3" });
      add("M970 443L976 457L984 480", { stroke: "#e01818", "stroke-width": 1.5 });
      add("M972 440L993 436L1003 437L987 446Z", { fill: "#94989b" });
    </script>
</body>
</html>
